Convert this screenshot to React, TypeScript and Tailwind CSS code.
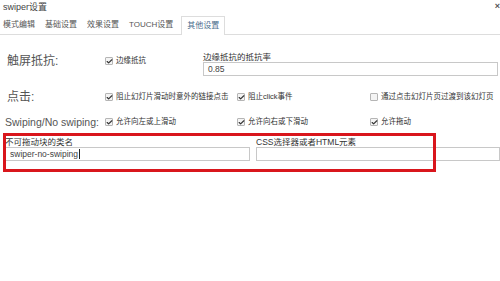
import { Check } from "lucide-react";

const font = { fontFamily: '"Liberation Sans", "Noto Sans CJK SC", sans-serif' };

const tabs = ["模式编辑", "基础设置", "效果设置", "TOUCH设置", "其他设置"];

function Box({ checked }: { checked: boolean }) {
  return (
    <span className="grid h-[8px] w-[8px] shrink-0 place-items-center rounded-[1px] border border-[#b5b5b5] bg-[#f4f4f4]">
      {checked && <Check className="h-[7px] w-[7px] text-[#333]" strokeWidth={4} />}
    </span>
  );
}

function Opt({ label, checked = true }: { label: string; checked?: boolean }) {
  return (
    <label className="flex items-center gap-[3px] whitespace-nowrap text-[7.5px] text-[#333]">
      <Box checked={checked} />
      <span>{label}</span>
    </label>
  );
}

function Field({ label, value, cursor }: { label: string; value?: string; cursor?: boolean }) {
  return (
    <div className="flex flex-col">
      <span className="whitespace-nowrap text-[8.5px] leading-[10px] text-[#333]">{label}</span>
      <div className="flex h-[14px] items-center border border-[#c8c8c8] bg-white pl-[4px] text-[8.5px] text-[#444]">
        {value}
        {cursor && <span className="ml-px h-[10px] w-px bg-[#222]" />}
      </div>
    </div>
  );
}

export default function App() {
  return (
    <div className="relative h-[281px] w-[500px] overflow-hidden bg-white" style={font}>
      <div className="flex h-[16px] items-center justify-between pl-[3px]">
        <span className="text-[9px] text-[#444]">swiper设置</span>
        <span className="-mt-[4px] text-[9px] font-bold leading-none text-[#555]">×</span>
      </div>

      <div className="flex h-[19px] items-end border-b border-[#ddd] pl-[3px]">
        {tabs.map((t, i) => (
          <div
            key={t}
            className={`flex items-center whitespace-nowrap text-[8px] ${
              i === 4
                ? "-mb-px -ml-[2px] h-[19px] border border-b-0 border-[#ddd] bg-white px-[5px] text-[#4a6d8c]"
                : "mr-[10px] h-[18px] text-[#555]"
            }`}
          >
            {t}
          </div>
        ))}
      </div>

      <div className="grid grid-cols-[105px_98px_1fr] items-start pt-[17px]">
        <span className="whitespace-nowrap pl-[7px] pt-[1px] text-[12px] leading-[16px] text-[#555]">触屏抵抗:</span>
        <div className="pt-[3px]">
          <Opt label="边缘抵抗" />
        </div>
        <div className="pr-[2px]">
          <Field label="边缘抵抗的抵抗率" value="0.85" />
        </div>
      </div>

      <div className="mt-[13px] grid grid-cols-[105px_132px_133px_1fr] items-center">
        <span className="whitespace-nowrap pl-[7px] text-[12px] leading-[16px] text-[#555]">点击:</span>
        <Opt label="阻止幻灯片滑动时意外的链接点击" />
        <Opt label="阻止click事件" />
        <Opt label="通过点击幻灯片页过渡到该幻灯页" checked={false} />
      </div>

      <div className="mt-[9px] grid grid-cols-[105px_132px_133px_1fr] items-center">
        <span className="whitespace-nowrap pl-[5px] text-[10.5px] leading-[16px] text-[#555]">Swiping/No swiping:</span>
        <Opt label="允许向左或上滑动" />
        <Opt label="允许向右或下滑动" />
        <Opt label="允许拖动" />
      </div>

      <div className="mt-[7px] grid grid-cols-[245px_1fr] gap-[6px] pl-[5px]">
        <Field label="不可拖动块的类名" value="swiper-no-swiping" cursor />
        <Field label="CSS选择器或者HTML元素" />
      </div>

      <div className="pointer-events-none absolute left-[3px] top-[133px] h-[39px] w-[433px] border-[3px] border-[#d9161c]" />
    </div>
  );
}
